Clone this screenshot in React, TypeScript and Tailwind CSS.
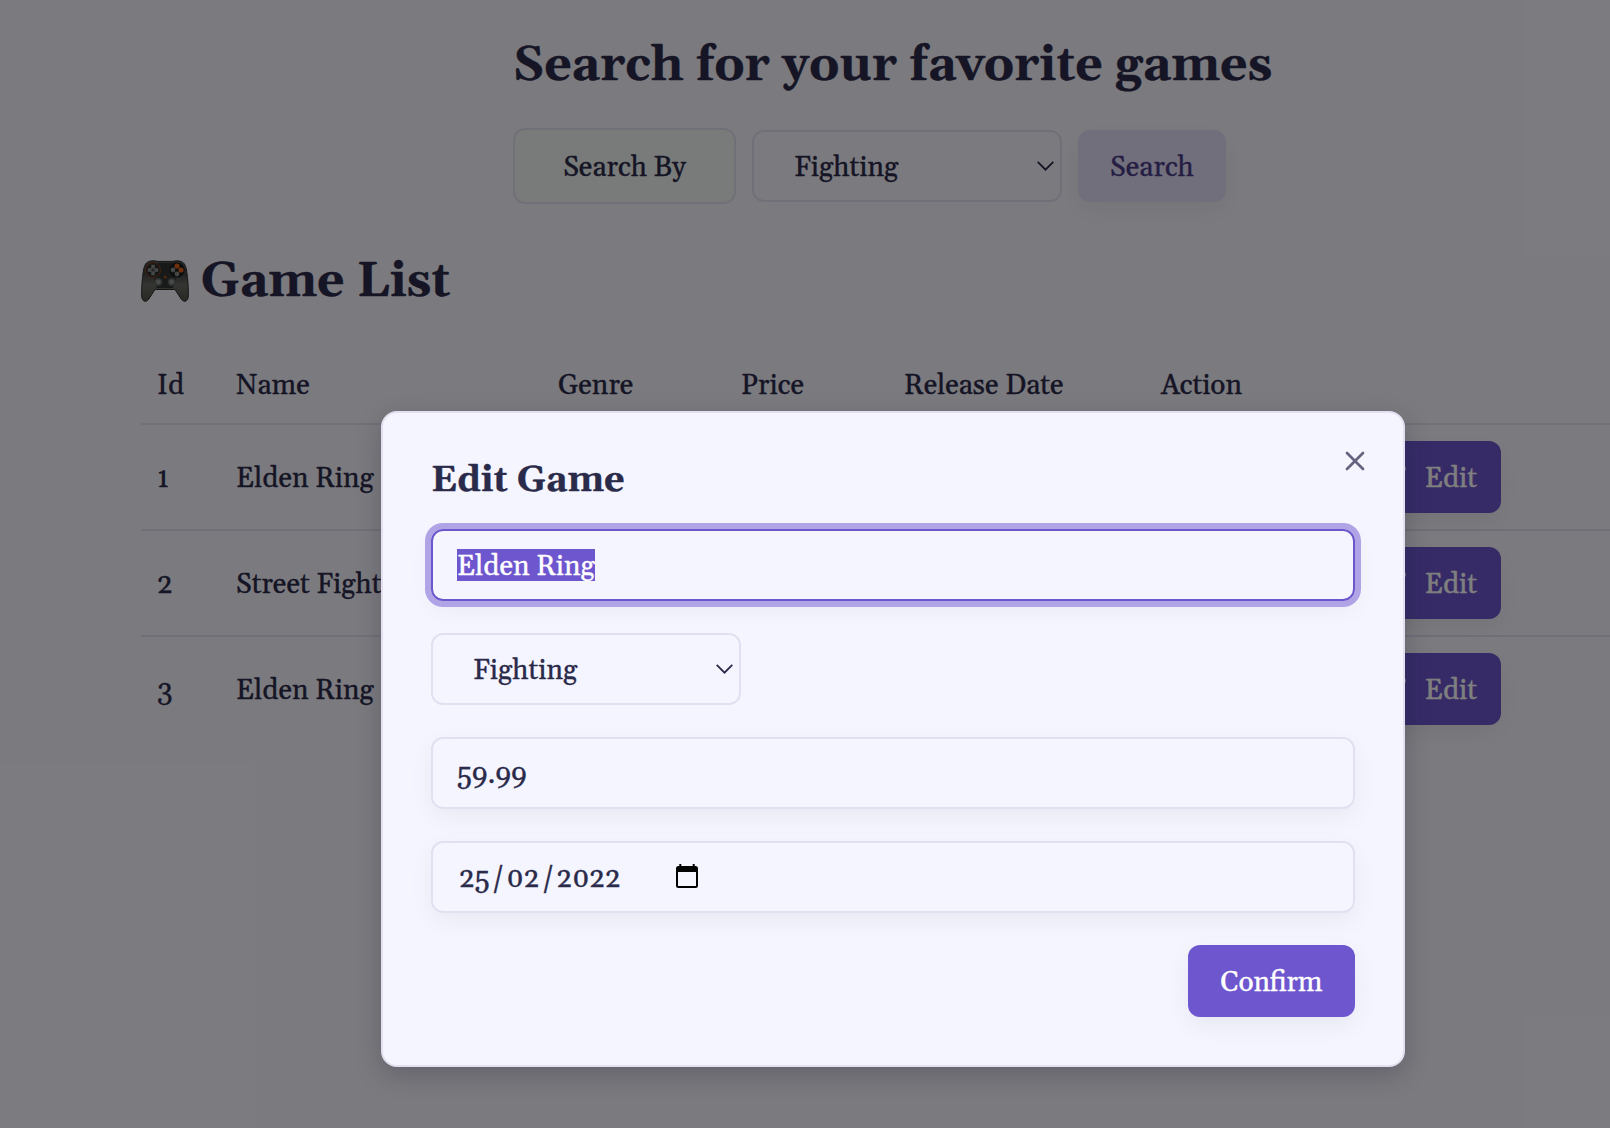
import React from 'react';
import { Pencil, X } from 'lucide-react';

const serif = "font-[Georgia,Gelasio,'Liberation_Serif',serif]";

function Chevron() {
  return (
    <svg className="h-[10px] w-[17px] shrink-0" viewBox="0 0 17 10" fill="none" stroke="currentColor" strokeWidth="1.8">
      <path d="M0.7 0.9 8.5 8.7 16.3 0.9" />
    </svg>
  );
}

function Gamepad() {
  return (
    <svg className="mb-0.5 h-[42px] w-[48px] shrink-0" viewBox="0 0 48 42">
      <defs>
        <linearGradient id="pad" x1="0" y1="0" x2="0" y2="1">
          <stop offset="0" stopColor="#4c5252" />
          <stop offset=".3" stopColor="#3e4242" />
          <stop offset=".6" stopColor="#6a6a64" />
          <stop offset="1" stopColor="#50504a" />
        </linearGradient>
      </defs>
      <path d="M9 1.2C13 .2 15 1.4 17 1.4H31C33 1.4 35 .2 39 1.2C43 2 44.5 5 45.5 10C47 20 47.6 30 47.3 36C47 42 43 42.500 40.500 39.500L34 29.500H14L7.500 39.500C5 42.500 1 42 .7 36C.4 30 1 20 2.500 10C3.500 5 5 2 9 1.200Z" fill="url(#pad)" stroke="#2a2c2c" strokeWidth="1" />
      <path d="M16 3H32C32 9 31 15 35 19L32 28H16L13 19C17 15 16 9 16 3Z" fill="#303434" />
      <circle cx="12" cy="10" r="7.4" fill="#2a2c2c" stroke="#8c4420" strokeWidth="1" />
      <path d="M12 4.8V15.2M6.8 10H17.2" stroke="#8a8c8c" strokeWidth="3.6" />
      <circle cx="12" cy="10" r="1.8" fill="#4a4c4c" />
      <circle cx="36" cy="10" r="7.6" fill="#161818" />
      <circle cx="36" cy="6" r="2.6" fill="#e0601c" />
      <circle cx="40" cy="10" r="2.6" fill="#e0601c" />
      <circle cx="32" cy="10" r="2.4" fill="#8a8c8c" />
      <circle cx="36" cy="14" r="2.4" fill="#8a8c8c" />
      <circle cx="24.2" cy="17" r="1.6" fill="#a04820" />
      <circle cx="17.3" cy="22" r="3.2" fill="#909292" stroke="#606262" strokeWidth="1.6" />
      <circle cx="30.7" cy="22" r="3.2" fill="#909292" stroke="#606262" strokeWidth="1.6" />
    </svg>
  );
}

function Genre() {
  return (
    <div className="flex h-[72px] w-[310px] items-center justify-between rounded-xl border-2 border-[#e2e0f0] pl-10 pr-1.5">
      <span className="pt-1">Fighting</span>
      <Chevron />
    </div>
  );
}

const rows = [
  { id: '1', name: 'Elden Ring' },
  { id: '2', name: 'Street Fighter' },
  { id: '3', name: 'Elden Ring' },
];

const cols = 'grid grid-cols-[79px_322px_183px_163px_257px_1fr]';
const field = 'flex h-[72px] w-full items-center rounded-xl border-2 px-6 shadow-[0_8px_24px_rgba(0,0,0,0.05)]';

export default function App() {
  return (
    <div className={`relative h-[1128px] w-[1610px] overflow-hidden bg-[#f7f5fd] text-[28px] leading-[40px] text-[#2a2a4a] [-webkit-text-stroke:0.35px_currentColor] ${serif}`}>
      <header className="ml-[513px] pt-[38px]">
        <h1 className="text-[48px] font-bold leading-[56px] whitespace-nowrap">Search for your favorite games</h1>
        <div className="mt-[34px] flex items-center gap-4">
          <div className="flex h-[76px] w-[223px] items-center justify-center rounded-xl border-2 border-[#e2e0f0] bg-[#f2f6f4] pt-1">Search By</div>
          <Genre />
          <button className="h-[72px] w-[148px] rounded-xl bg-[#e4dffb] pt-1 text-[#4b3c86] shadow-[0_8px_24px_rgba(0,0,0,0.06)]">Search</button>
        </div>
      </header>
      <main className="ml-[141px] mt-[50px]">
        <h2 className="flex h-[56px] items-center gap-3 text-[48px] font-bold leading-[56px]">
          <Gamepad />
          <span>Game List</span>
        </h2>
        <div className="mt-[34px] w-[1600px]">
          <div className={`${cols} h-[81px] items-center border-b-2 border-[#e2e0f0] pl-4 pt-1`}>
            <span>Id</span><span>Name</span><span>Genre</span><span>Price</span><span>Release Date</span><span>Action</span>
          </div>
          {rows.map((r) => (
            <div key={r.id} className={`${cols} h-[106px] items-center border-b-2 border-[#e2e0f0] pl-4 last:border-transparent`}>
              <span className="pt-1">{r.id}</span>
              <span className="col-span-4 pt-1">{r.name}</span>
              <button className="ml-[200px] flex h-[72px] w-[140px] items-center justify-end gap-[18px] rounded-xl bg-[#6c56cc] pr-6 text-white shadow-[0_8px_24px_rgba(0,0,0,0.06)]">
                <Pencil size={28} />
                <span className="pt-1">Edit</span>
              </button>
            </div>
          ))}
        </div>
      </main>

      <div className="absolute inset-0 bg-black/50" />
      <div className="absolute left-[381px] top-[411px] flex h-[656px] w-[1024px] flex-col gap-8 rounded-2xl border-2 border-[#e2e0f0] bg-[#f5f5ff] p-12 shadow-[0_8px_24px_rgba(30,30,60,0.25)]">
        <button className="absolute right-8 top-8 text-[#66637f]"><X size={32} /></button>
        <h3 className="h-9 text-[36px] font-bold leading-[40px]">Edit Game</h3>
        <div className={`${field} border-[#6c56cc] ring-[6px] ring-[#b0a3e6]`}>
          <span className="h-8 bg-[#6e56cf] leading-[36px] text-white">Elden Ring</span>
        </div>
        <Genre />
        <div className={`${field} border-[#e2e0f0]`}><span className="pt-1">59.99</span></div>
        <div className={`${field} border-[#e2e0f0]`}>
          <span className="w-[219px] pl-0.5 pt-1">25<span className="mx-0.5">/</span>02<span className="mx-0.5">/</span>2022</span>
          <svg className="mb-0.5 h-6 w-[22px]" viewBox="0 0 22 24">
            <path d="M2.5 2H19.500Q22 2 22 4.500V21.500Q22 24 19.500 24H2.500Q0 24 0 21.500V4.500Q0 2 2.500 2ZM2 8V22H20V8Z" fillRule="evenodd" fill="black" />
            <path d="M3.300 0H5.300V3H3.300ZM16.700 0H18.700V3H16.700Z" fill="black" />
          </svg>
        </div>
        <button className="h-[72px] w-[167px] shrink-0 self-end rounded-xl bg-[#6e56cf] pt-1 text-white shadow-[0_8px_24px_rgba(0,0,0,0.06)]">Confirm</button>
      </div>
    </div>
  );
}
